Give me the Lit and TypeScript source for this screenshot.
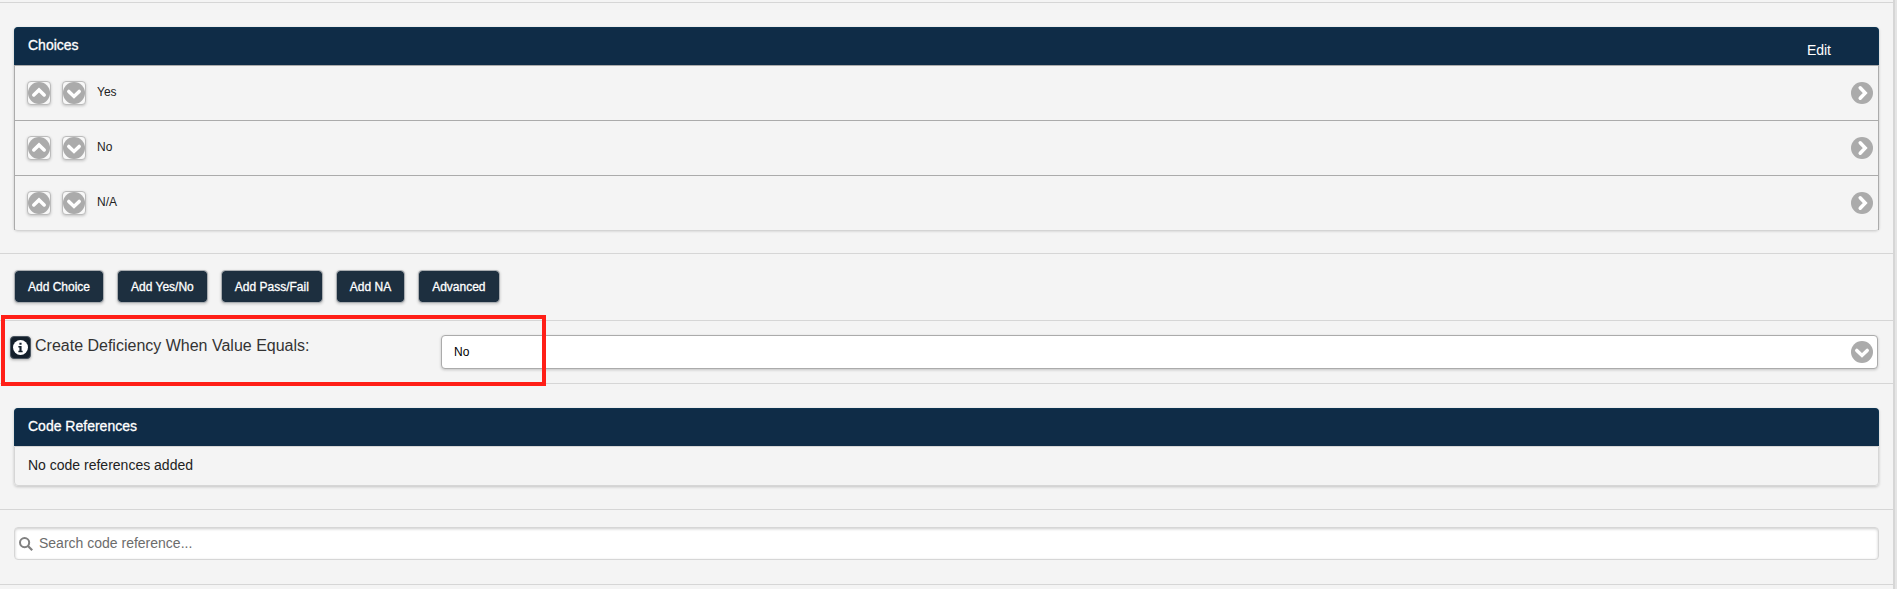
import { LitElement, html, css, svg } from "lit";
import { customElement, property, state } from "lit/decorators.js";

type Direction = "up" | "down" | "right";

const CHEVRONS: Record<Direction, string> = {
  up: "M5.8 13 L11 8 L16.2 13",
  down: "M5.8 9.4 L11 14.4 L16.2 9.4",
  right: "M9.2 5.8 L14.2 11 L9.2 16.2",
};

@customElement("disc-icon")
export class DiscIcon extends LitElement {
  @property() direction: Direction = "right";

  static styles = css`
    :host {
      display: block;
      width: 22px;
      height: 22px;
    }
    svg {
      display: block;
    }
  `;

  render() {
    return html`<svg width="22" height="22" viewBox="0 0 22 22" aria-hidden="true">
      ${svg`<circle cx="11" cy="11" r="11" fill="#ababab"></circle>
      <path d=${CHEVRONS[this.direction]} fill="none" stroke="#fff" stroke-width="3.5" stroke-linecap="round"></path>`}
    </svg>`;
  }
}

@customElement("app-root")
export class AppRoot extends LitElement {
  @state() private choices = ["Yes", "No", "N/A"];
  @state() private selected = "No";

  private actions = ["Add Choice", "Add Yes/No", "Add Pass/Fail", "Add NA", "Advanced"];

  static styles = css`
    :host {
      display: block;
      min-height: 100vh;
      box-sizing: border-box;
      padding-top: 2px;
      border-right: 2px solid #e5e5e5;
      background: #f4f4f4;
      color: #222;
      font: 14px/20px "Liberation Sans", Arial, sans-serif;
      box-shadow: inset -2px 0 #d6d6d6;
    }
    * {
      box-sizing: border-box;
    }
    button,
    input,
    select {
      font-family: inherit;
      margin: 0;
    }
    .band {
      margin-right: 2px;
      padding: 24px 14px 23px;
      border-top: 1px solid #d6d6d6;
    }
    .actions {
      display: flex;
      flex-wrap: wrap;
      gap: 13px;
      padding-top: 16px;
      padding-bottom: 17px;
    }
    .action {
      height: 33px;
      padding: 0 13px;
      border: 1px solid #a9adb1;
      border-radius: 4px;
      background: #1d2f3f;
      background-clip: padding-box;
      color: #fff;
      font-size: 12px;
      line-height: 16px;
      -webkit-text-stroke: 0.3px #fff;
      box-shadow: 0 1px 3px rgba(0, 0, 0, 0.2);
    }
    .panel {
      border-radius: 4px;
      box-shadow: 0 1px 3px rgba(0, 0, 0, 0.2);
    }
    .panel-head {
      display: flex;
      justify-content: space-between;
      height: 38px;
      padding: 7px 47px 0 13px;
      border: 1px solid #0c3350;
      border-bottom: 0;
      border-radius: 4px 4px 0 0;
      background: #0f2c47;
      color: #fff;
    }
    h2 {
      margin: 0;
      font: inherit;
      -webkit-text-stroke: 0.3px #fff;
    }
    .edit {
      padding-top: 5px;
      color: #fff;
      text-decoration: none;
    }
    .choices {
      margin: 0;
      padding: 0;
      list-style: none;
      border: solid #ababab;
      border-width: 0 1px;
    }
    .choice {
      display: flex;
      align-items: flex-start;
      height: 55px;
      padding: 15px 5px 0 12px;
      border-top: 1px solid #ababab;
      font-size: 12px;
      line-height: 22px;
    }
    .move {
      width: 24px;
      height: 24px;
      margin-right: 11px;
      padding: 0;
      border: 1px solid #bcbcbc;
      border-radius: 4px;
      background: #f8f8f8;
      box-shadow: 0 1px 3px rgba(0, 0, 0, 0.2);
    }
    .open {
      margin-left: auto;
      padding-top: 1px;
    }
    .deficiency {
      position: relative;
      display: grid;
      grid-template-columns: 3fr 10fr;
      align-items: start;
      padding: 14px 15px 14px 10px;
    }
    .caption {
      display: flex;
      gap: 4px;
      font-size: 16px;
      line-height: 22px;
      color: #333;
    }
    .info {
      width: 21px;
      height: 23px;
      margin-top: 1px;
      padding: 0;
      border: 1px solid #4a5560;
      border-radius: 4px;
      background: #14202c;
      box-shadow: 0 1px 3px rgba(0, 0, 0, 0.3);
    }
    .info svg {
      display: block;
      margin: auto;
    }
    .picker {
      position: relative;
    }
    select {
      display: block;
      appearance: none;
      width: 100%;
      height: 34px;
      padding: 0 40px 0 12px;
      border: 1px solid #ababab;
      border-radius: 4px;
      background: #fff;
      color: #000;
      font-size: 12px;
      box-shadow: 0 1px 3px rgba(0, 0, 0, 0.2);
    }
    .picker disc-icon {
      position: absolute;
      right: 5px;
      top: 6px;
      pointer-events: none;
    }
    .highlight {
      position: absolute;
      left: 1px;
      top: -6px;
      bottom: -3px;
      width: 545px;
      border: 4px solid #ff1f17;
      pointer-events: none;
    }
    .empty {
      height: 40px;
      margin: 0;
      padding: 8px 13px;
      border: 1px solid #d6d6d6;
      border-radius: 0 0 4px 4px;
    }
    .search {
      padding-top: 17px;
      padding-bottom: 24px;
    }
    .field {
      display: flex;
      align-items: center;
      gap: 6px;
      height: 33px;
      padding: 0 4px;
      border: 1px solid #d6d6d6;
      border-radius: 4px;
      background: #fff;
      box-shadow: inset 0 1px 3px rgba(0, 0, 0, 0.2);
    }
    .field input {
      flex: 1;
      padding: 0 0 2px;
      border: 0;
      outline: 0;
      background: none;
      color: #222;
      font-size: 14px;
    }
    .field input::placeholder {
      color: #6c6c6c;
    }
    .tail {
      padding: 0;
    }
  `;

  private move(index: number, step: number) {
    const target = index + step;
    if (target < 0 || target >= this.choices.length) return;
    const next = [...this.choices];
    [next[index], next[target]] = [next[target], next[index]];
    this.choices = next;
  }

  render() {
    return html`
      <section class="band">
        <div class="panel">
          <div class="panel-head">
            <h2>Choices</h2>
            <a class="edit" href="#edit">Edit</a>
          </div>
          <ul class="choices">
            ${this.choices.map(
              (choice, i) => html`<li class="choice">
                <button class="move" aria-label="Move up" @click=${() => this.move(i, -1)}>
                  <disc-icon direction="up"></disc-icon>
                </button>
                <button class="move" aria-label="Move down" @click=${() => this.move(i, 1)}>
                  <disc-icon direction="down"></disc-icon>
                </button>
                <span>${choice}</span>
                <a class="open" href="#choice" aria-label="Open choice"><disc-icon></disc-icon></a>
              </li>`
            )}
          </ul>
        </div>
      </section>

      <section class="band actions">
        ${this.actions.map((label) => html`<button class="action">${label}</button>`)}
      </section>

      <section class="band deficiency">
        <div class="caption">
          <button class="info" aria-label="Information">
            <svg width="15" height="15" viewBox="0 0 14 14" aria-hidden="true">
              <circle cx="7" cy="7" r="7" fill="#fff"></circle>
              <path d="M6 2.5h2v2H6zM5 5.5h3v4.5h1v1.5H5V10h1V7H5z" fill="#14202c"></path>
            </svg>
          </button>
          <label for="deficiency">Create Deficiency When Value Equals:</label>
        </div>
        <div class="picker">
          <select
            id="deficiency"
            @change=${(e: Event) => (this.selected = (e.target as HTMLSelectElement).value)}
          >
            ${this.choices.map(
              (c) => html`<option value=${c} ?selected=${c === this.selected}>${c}</option>`
            )}
          </select>
          <disc-icon direction="down"></disc-icon>
        </div>
        <div class="highlight"></div>
      </section>

      <section class="band">
        <div class="panel">
          <div class="panel-head"><h2>Code References</h2></div>
          <p class="empty">No code references added</p>
        </div>
      </section>

      <section class="band search">
        <div class="field">
          <svg width="14" height="14" viewBox="0 0 14 14" aria-hidden="true">
            <circle cx="5.6" cy="5.6" r="4.6" fill="none" stroke="#808080" stroke-width="2"></circle>
            <path d="M9 9L13.2 13.2" stroke="#808080" stroke-width="2.2"></path>
          </svg>
          <input type="search" aria-label="Search code reference" placeholder="Search code reference..." />
        </div>
      </section>
      <div class="band tail"></div>
    `;
  }
}
